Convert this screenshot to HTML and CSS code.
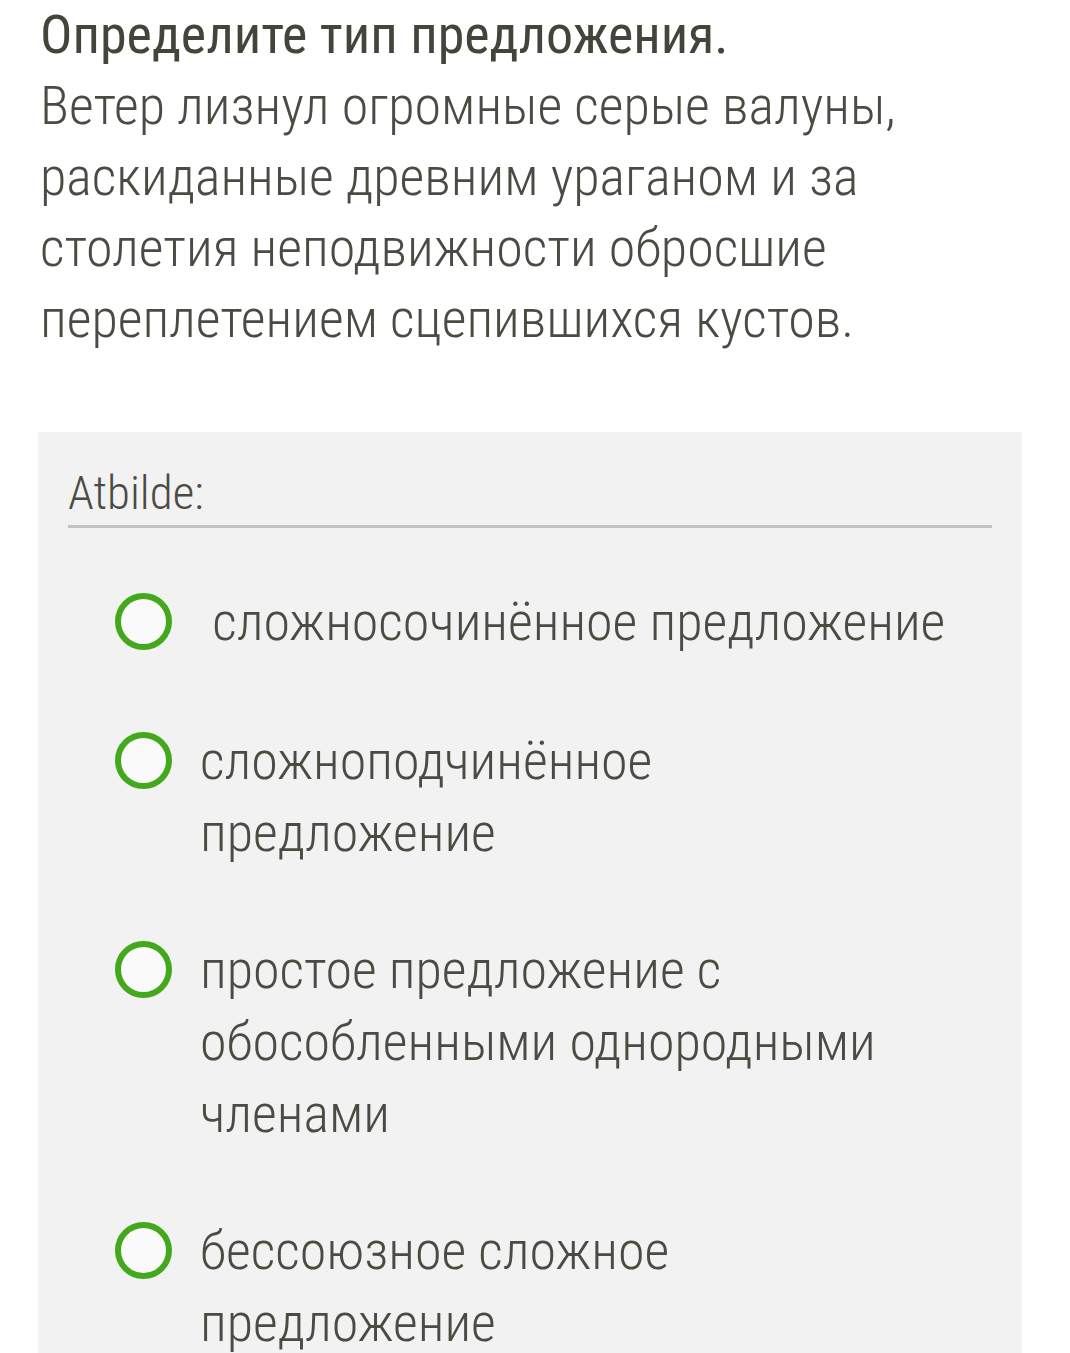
FILE: index.html
```html
<!DOCTYPE html>
<html lang="ru">
<head>
<meta charset="utf-8">
<link rel="stylesheet" href="styles.css">
</head>
<body>
<div class="page">
  <h1 class="title">Определите тип предложения.</h1>
  <p class="text">Ветер лизнул огромные серые валуны, раскиданные древним ураганом и за столетия неподвижности обросшие переплетением сцепившихся кустов.</p>
  <div class="answer">
    <div class="answer-label">Atbilde:</div>
    <div class="options">
      <div class="option option-first"><span class="radio"></span><span class="option-text">&nbsp;сложносочинённое предложение</span></div>
      <div class="option"><span class="radio"></span><span class="option-text">сложноподчинённое<br>предложение</span></div>
      <div class="option"><span class="radio"></span><span class="option-text">простое предложение с обособленными однородными членами</span></div>
      <div class="option"><span class="radio"></span><span class="option-text">бессоюзное сложное<br>предложение</span></div>
    </div>
  </div>
</div>
</body>
</html>
```
FILE: styles.css
```css
html, body {
  margin: 0;
  padding: 0;
  background: #ffffff;
}
body {
  font-family: "Roboto Condensed", "Roboto", "Liberation Sans", sans-serif;
  color: #4b4b43;
}
.page {
  padding: 0 40px 0 40px;
  height: 1353px;
  overflow: hidden;
}
.title {
  margin: 0;
  font-size: 54px;
  font-weight: 400;
  line-height: 70px;
  color: #44443a;
}
.text {
  margin: 0 0 78px 0;
  width: 980px;
  font-size: 54px;
  font-weight: 300;
  line-height: 71px;
}
.answer {
  margin-left: -2px;
  width: 984px;
  background: #f2f2f2;
  padding: 30px 30px 40px 30px;
  box-sizing: border-box;
  min-height: 940px;
}
.answer-label {
  font-size: 47px;
  font-weight: 300;
  line-height: 58px;
  padding-top: 2px;
  padding-bottom: 3px;
  border-bottom: 3px solid #c2c2c2;
}
.options {
  display: flex;
  flex-direction: column;
  gap: 65px;
  padding: 58px 0 0 47px;
}
.option-first {
  margin-bottom: 2px;
}
.option {
  display: flex;
  align-items: flex-start;
  gap: 28px;
}
.radio {
  flex: 0 0 auto;
  width: 45px;
  height: 45px;
  margin-top: 7px;
  border: 6px solid #43a81c;
  border-radius: 50%;
  background: #fafafa;
}
.option-text {
  font-size: 54px;
  font-weight: 300;
  line-height: 72px;
  width: 760px;
}
```
